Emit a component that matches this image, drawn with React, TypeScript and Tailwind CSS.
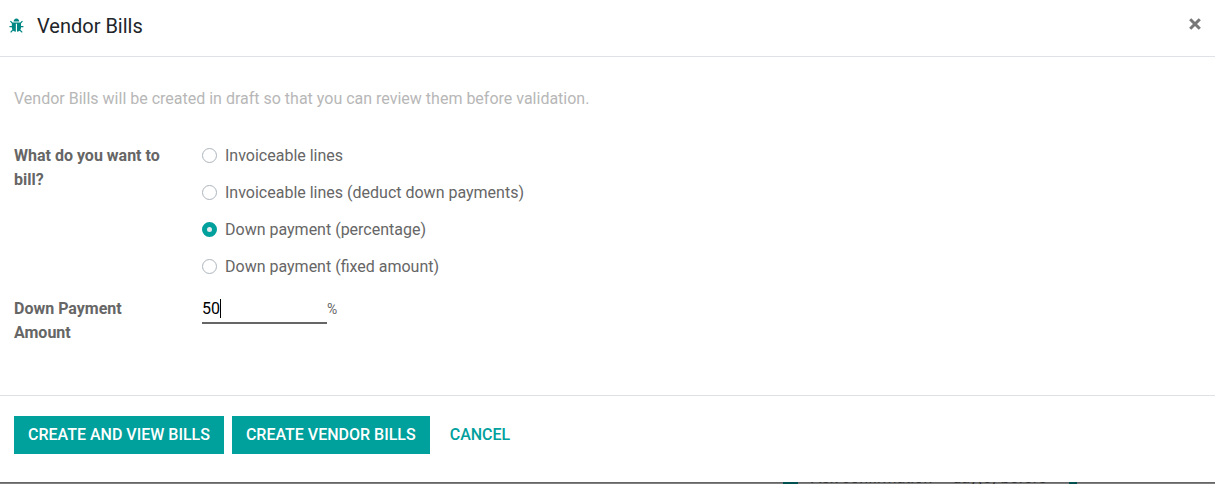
import { useState } from "react";

const options = [
  { id: "lines", label: "Invoiceable lines" },
  { id: "lines-deduct", label: "Invoiceable lines (deduct down payments)" },
  { id: "percentage", label: "Down payment (percentage)" },
  { id: "fixed", label: "Down payment (fixed amount)" },
];

function BugIcon() {
  return (
    <svg viewBox="0 0 1792 1792" className="size-4 fill-[#008784]" aria-hidden="true">
      <path d="M1632 960q0 26-19 45t-45 19h-224q0 171-67 290l208 209q19 19 19 45t-19 45q-18 19-45 19t-45-19l-198-197q-5 5-15 13t-42 28.500-65 36.500-82 29-97 13v-896h-128v896q-51 0-101.500-13.500t-87-33-66-39-43.500-32.500l-15-14-183 207q-20 21-48 21-24 0-43-16-19-18-20.500-44.500t15.500-46.500l202-227q-58-114-58-274h-224q-26 0-45-19t-19-45 19-45 45-19h224v-294l-173-173q-19-19-19-45t19-45 45-19 45 19l173 173h844l173-173q19-19 45-19t45 19 19 45-19 45l-173 173v294h224q26 0 45 19t19 45zm-480-576h-640q0-133 93.500-226.500t226.500-93.500 226.500 93.500 93.500 226.500z" />
    </svg>
  );
}

export default function App() {
  const [choice, setChoice] = useState("percentage");
  const [amount, setAmount] = useState("50");

  return (
    <div className="bg-white font-['Roboto',sans-serif] text-base text-[#666666]">
      <header className="flex h-[57px] items-center justify-between border-b border-[#dee2e6] pr-3.5 pb-1 pl-[9px]">
        <div className="flex items-center gap-3">
          <button type="button" aria-label="Debug">
            <BugIcon />
          </button>
          <h1 className="text-xl text-[#212529]">Vendor Bills</h1>
        </div>
        <button type="button" aria-label="Close" className="pb-1">
          <svg viewBox="0 0 12 12" className="size-3 stroke-[#777777]" aria-hidden="true">
            <path d="M1.200 1.200L10.800 10.800M10.800 1.200L1.200 10.800" strokeWidth="3" />
          </svg>
        </button>
      </header>

      <main className="px-3.5 pt-[30px] pb-[50px]">
        <p className="text-[#b7b7b7]">
          Vendor Bills will be created in draft so that you can review them before validation.
        </p>

        <div className="mt-[33px] grid grid-cols-[168px_1fr] gap-x-5 gap-y-[18px]">
          <div id="bill-label" className="font-bold">
            What do you want to bill?
          </div>
          <div role="radiogroup" aria-labelledby="bill-label" className="flex flex-col gap-[13px]">
            {options.map((option) => (
              <label key={option.id} className="flex items-start gap-2">
                <input
                  type="radio"
                  name="bill"
                  checked={choice === option.id}
                  onChange={() => setChoice(option.id)}
                  className="mt-1 size-[15px] appearance-none rounded-full border border-[#adb5bd] bg-white checked:border-[5px] checked:border-[#00a09d] checked:bg-[#e9ecef]"
                />
                <span>{option.label}</span>
              </label>
            ))}
          </div>

          <label htmlFor="amount" className="w-32 font-bold">
            Down Payment Amount
          </label>
          <div className="flex items-start">
            <div className="relative w-[125px]">
              <input
                id="amount"
                type="text"
                value={amount}
                onChange={(event) => setAmount(event.target.value)}
                className="block h-[27px] w-full border-b-2 border-[#666666] pb-[3px] text-black caret-transparent outline-none"
              />
              <span className="absolute top-0.5 left-[18px] h-[19px] w-px bg-black" />
            </div>
            <span className="text-sm/6">%</span>
          </div>
        </div>
      </main>

      <footer className="flex items-center gap-2 border-t border-[#dee2e6] px-3.5 pt-5 pb-7 font-medium">
        <button type="button" className="h-[38px] bg-[#00a09d] px-3.5 text-white">
          CREATE AND VIEW BILLS
        </button>
        <button type="button" className="h-[38px] bg-[#00a09d] px-3.5 text-white">
          CREATE VENDOR BILLS
        </button>
        <button type="button" className="h-[38px] px-3 text-[#00a09d]">
          CANCEL
        </button>
      </footer>

      {/* Top edge of the dimmed form under the dialog */}
      <div
        className="flex h-0.5 items-end overflow-hidden bg-[linear-gradient(#666666_50%,#7f7f7f_50%)] pl-[783px] leading-3 text-[#333333]"
        aria-hidden="true"
      >
        <span className="h-3 w-[15px] shrink-0 bg-[#005050]" />
        <span className="ml-[13px] shrink-0">Ask confirmation</span>
        <span className="ml-5 shrink-0">day(s) before</span>
        <span className="ml-[22px] h-3 w-2 shrink-0 bg-[#005050]" />
      </div>
    </div>
  );
}
